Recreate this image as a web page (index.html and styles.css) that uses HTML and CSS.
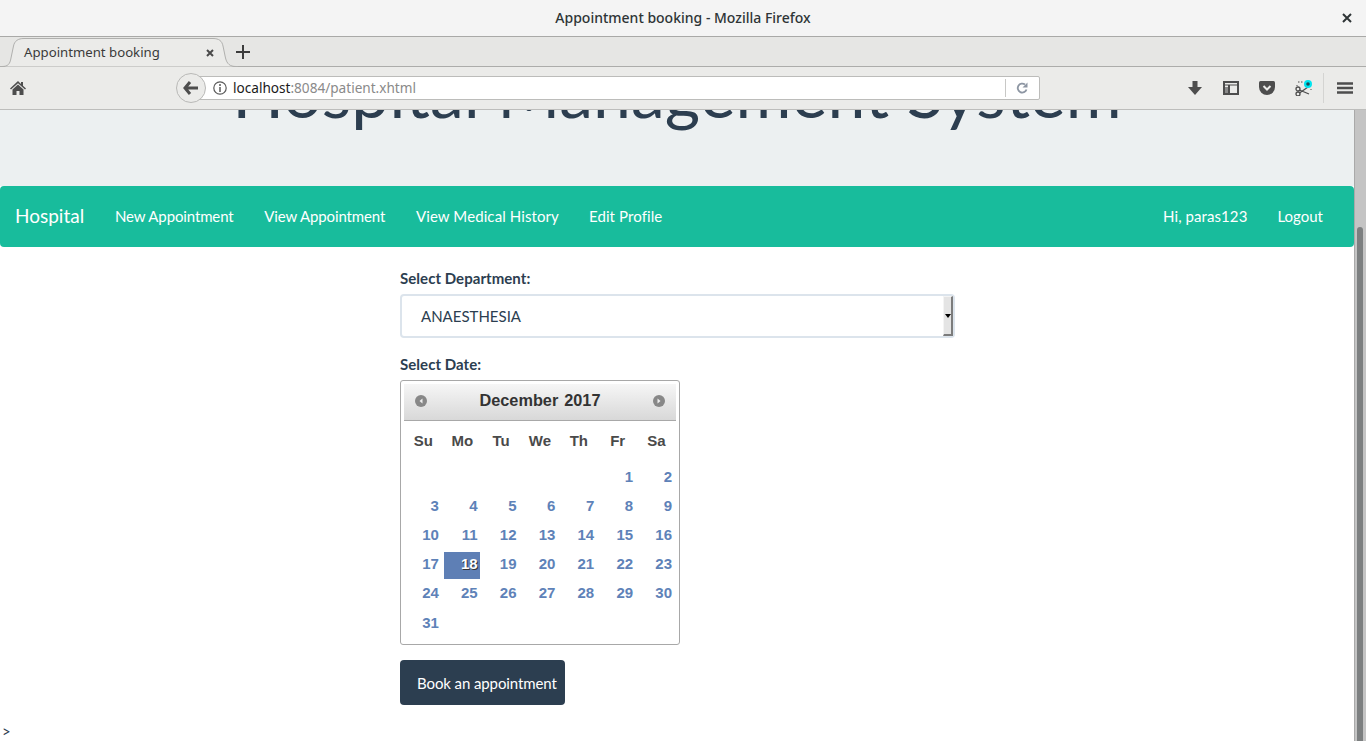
FILE: index.html
```html
<!DOCTYPE html>
<html>
<head>
    <title>Appointment booking</title>
    <link rel="stylesheet" href="styles.css">
</head>
<body>
    <div class="titlebar">
        <span class="window-title">Appointment booking - Mozilla Firefox</span>
        <svg class="window-close" width="10" height="10" viewBox="0 0 10 10"><path d="M1 1L9 9M9 1L1 9" stroke="#2e3436" stroke-width="2"/></svg>
    </div>
    <div class="tabbar">
        <div class="tab">
            <svg class="tab-shape" width="238" height="31" viewBox="0 0 238 31"><path d="M0 30.500H2C8 30.500 10 28 11 22L13.500 10C14.500 5 18 2.500 24 2.500H213C219 2.500 222 5 223 10L225.500 22C227 28 230 30.500 236 30.500H238" fill="#ebebe9" stroke="#b0b0ae"/></svg>
            <span class="tab-title">Appointment booking</span>
            <svg class="tab-close" width="8" height="8" viewBox="0 0 8 8"><path d="M1 1L7 7M7 1L1 7" stroke="#4a4a4a" stroke-width="2"/></svg>
        </div>
        <svg class="new-tab" width="14" height="14" viewBox="0 0 14 14"><path d="M7 0V14M0 7H14" stroke="#3c3c3c" stroke-width="2"/></svg>
    </div>
    <div class="toolbar">
        <svg class="home-icon" width="16" height="14" viewBox="0 0 16 14"><path d="M8 0L0 7.500L1 8.500L8 2.200L15 8.500L16 7.500L13 4.700V1H11V2.900ZM8 3.500L2.500 8.500V14H6.500V10H9.500V14H13.500V8.500Z" fill="#4d4d4d"/></svg>
        <div class="urlbar">
            <div class="back-btn">
                <svg width="16" height="14" viewBox="0 0 16 14"><path d="M7 1L2 7L7 13M2.500 7H15" fill="none" stroke="#4d4d4d" stroke-width="3"/></svg>
            </div>
            <svg class="info-icon" width="14" height="14" viewBox="0 0 14 14"><circle cx="7" cy="7" r="6.200" fill="none" stroke="#5a5a5a" stroke-width="1.200"/><path d="M7 6V11M7 3V5" stroke="#5a5a5a" stroke-width="1.500"/></svg>
            <span class="url"><span class="url-host">localhost</span>:8084/patient.xhtml</span>
            <span class="url-sep"></span>
            <svg class="reload-icon" width="12" height="12" viewBox="0 0 12 12"><path d="M10.500 7.500A4.500 4.500 0 1 1 9 2.500" fill="none" stroke="#8d96a3" stroke-width="1.800"/><path d="M11.500 0.500V5.500H6.500Z" fill="#8d96a3"/></svg>
        </div>
        <div class="tools">
            <svg class="download-icon" width="14" height="14" viewBox="0 0 14 14"><path d="M4.500 0H9.500V6H14L7 14L0 6H4.500Z" fill="#4d4d4d"/></svg>
            <svg width="16" height="14" viewBox="0 0 16 14"><path d="M1 1H15V13H1ZM6 4V13" fill="none" stroke="#4d4d4d" stroke-width="2"/><path d="M1 4H15" stroke="#4d4d4d" stroke-width="1"/><path d="M2 6H5V12H2Z" fill="#8a8a8a"/></svg>
            <svg width="16" height="14" viewBox="0 0 16 14"><path d="M1.500 0H14.500Q16 0 16 1.500V6A8 8 0 0 1 0 6V1.500Q0 0 1.500 0Z" fill="#4d4d4d"/><path d="M4.500 5L8 8.500L11.500 5" fill="none" stroke="#ebebe9" stroke-width="2"/></svg>
            <svg class="shot-icon" width="17" height="16" viewBox="0 0 17 16"><circle cx="3" cy="9" r="2" fill="none" stroke="#4d4d4d" stroke-width="1.300"/><circle cx="3" cy="14" r="2" fill="none" stroke="#4d4d4d" stroke-width="1.300"/><path d="M4.500 10L14 14M4.500 13L13 7" stroke="#4d4d4d" stroke-width="1.300"/><path d="M3 2H8M2 5V6M16 9V10" stroke="#4d4d4d" stroke-dasharray="1.500 1.500"/><circle cx="13" cy="4" r="4" fill="#00e5f0"/><circle cx="13" cy="4" r="1.800" fill="#1a4a55"/></svg>
            <span class="tools-sep"></span>
            <svg width="16" height="12" viewBox="0 0 16 12"><path d="M0 1.500H16M0 6H16M0 10.500H16" stroke="#4d4d4d" stroke-width="2.400"/></svg>
        </div>
    </div>
    <div class="viewport">
        <div class="page">
            <div class="jumbotron">
                <h1>Hospital Management System</h1>
            </div>
            <nav class="navbar">
                <a class="brand">Hospital</a>
                <a class="nav-link tight">New Appointment</a>
                <a class="nav-link tight">View Appointment</a>
                <a class="nav-link loose">View Medical History</a>
                <a class="nav-link loose">Edit Profile</a>
                <a class="nav-link nav-right">Hi, paras123</a>
                <a class="nav-link">Logout</a>
            </nav>
            <form class="booking">
                <label class="field-label">Select Department:</label>
                <div class="select-box">
                    <span>ANAESTHESIA</span>
                    <span class="spin-btn"><i class="spin-arrow"></i></span>
                </div>
                <label class="field-label">Select Date:</label>
                <div class="datepicker">
                    <div class="dp-header">
                        <svg width="12" height="12" viewBox="0 0 12 12"><circle cx="6" cy="6" r="6" fill="#888"/><path d="M7.500 3.500L4.500 6L7.500 8.500Z" fill="#eee"/></svg>
                        <span class="dp-title"><span>December</span><span>2017</span></span>
                        <svg width="12" height="12" viewBox="0 0 12 12"><circle cx="6" cy="6" r="6" fill="#888"/><path d="M4.500 3.500L7.500 6L4.500 8.500Z" fill="#eee"/></svg>
                    </div>
                    <table class="dp-table">
                        <thead>
                            <tr><th>Su</th><th>Mo</th><th>Tu</th><th>We</th><th>Th</th><th>Fr</th><th>Sa</th></tr>
                        </thead>
                        <tbody>
                            <tr><td></td><td></td><td></td><td></td><td></td><td><a>1</a></td><td><a>2</a></td></tr>
                            <tr><td><a>3</a></td><td><a>4</a></td><td><a>5</a></td><td><a>6</a></td><td><a>7</a></td><td><a>8</a></td><td><a>9</a></td></tr>
                            <tr><td><a>10</a></td><td><a>11</a></td><td><a>12</a></td><td><a>13</a></td><td><a>14</a></td><td><a>15</a></td><td><a>16</a></td></tr>
                            <tr><td><a>17</a></td><td><a class="dp-active">18</a></td><td><a>19</a></td><td><a>20</a></td><td><a>21</a></td><td><a>22</a></td><td><a>23</a></td></tr>
                            <tr><td><a>24</a></td><td><a>25</a></td><td><a>26</a></td><td><a>27</a></td><td><a>28</a></td><td><a>29</a></td><td><a>30</a></td></tr>
                            <tr class="dp-last"><td><a>31</a></td><td></td><td></td><td></td><td></td><td></td><td></td></tr>
                        </tbody>
                    </table>
                </div>
                <button class="book-btn" type="button">Book an appointment</button>
            </form>
            <div class="stray">&gt;</div>
        </div>
        <div class="scrollbar"><div class="scroll-thumb"></div></div>
    </div>
</body>
</html>
```

FILE: styles.css
```css
html, body {
    height: 100%;
}

body {
    margin: 0;
    overflow: hidden;
    display: flex;
    flex-direction: column;
    font-family: "Lato", sans-serif;
    font-size: 15px;
    color: #2c3e50;
    background: #fff;
}

/* firefox window */
.titlebar {
    height: 37px;
    flex: none;
    display: flex;
    align-items: center;
    justify-content: center;
    padding-bottom: 2px;
    background: #f4f4f4;
    border-bottom: 1px solid #a9a9a7;
    position: relative;
    box-sizing: border-box;
}

.window-title {
    font-family: "Noto Sans", sans-serif;
    font-size: 14px;
    font-weight: 500;
    color: #2e3436;
}

.window-close {
    position: absolute;
    right: 14px;
    top: 13px;
}

.tabbar {
    height: 30px;
    flex: none;
    background: #e6e6e4;
    border-bottom: 1px solid #acacaa;
    box-sizing: border-box;
    display: flex;
    align-items: center;
}

.tab {
    position: relative;
    width: 238px;
    height: 31px;
    margin-top: -1px;
    flex: none;
    align-self: flex-start;
    display: flex;
    align-items: center;
}

.tab-shape {
    position: absolute;
    left: 0;
    top: 0;
}

.tab-title {
    position: relative;
    margin-left: 24px;
    font-family: "Noto Sans", sans-serif;
    font-size: 13.200px;
    color: #3a3a3a;
}

.tab-close {
    position: absolute;
    left: 206px;
    top: 13px;
}

.new-tab {
    margin-left: -2px;
}

.toolbar {
    height: 43px;
    flex: none;
    background: #ebebe9;
    border-bottom: 1px solid #bdbdbb;
    box-sizing: border-box;
    display: flex;
    align-items: center;
}

.home-icon {
    margin-left: 10px;
}

.urlbar {
    margin-left: 165px;
    width: 849px;
    height: 24px;
    box-sizing: border-box;
    background: #fff;
    border: 1px solid #bcbcba;
    border-radius: 2px;
    display: flex;
    align-items: center;
    position: relative;
    padding-left: 21px;
}

.back-btn {
    position: absolute;
    left: -16px;
    top: -4px;
    width: 30px;
    height: 30px;
    box-sizing: border-box;
    border: 1px solid #b9b9b7;
    border-radius: 50%;
    background: #ebebe9;
    display: flex;
    align-items: center;
    justify-content: center;
}

.info-icon {
    flex: none;
}

.url {
    margin-left: 6px;
    padding-bottom: 2px;
    font-family: "Noto Sans", sans-serif;
    font-size: 13.600px;
    color: #8a8a8a;
}

.url-host {
    color: #1a1a1a;
}

.url-sep {
    margin-left: auto;
    width: 1px;
    height: 18px;
    background: #c8c8c6;
}

.reload-icon {
    margin: 0 11px 0 10px;
}

.tools {
    margin-left: auto;
    display: flex;
    align-items: center;
    gap: 20px;
    padding-right: 13px;
}

.download-icon {
    margin-right: 1px;
}

.shot-icon {
    margin-right: -9px;
}

.tools-sep {
    width: 1px;
    height: 30px;
    background: #d4d4d2;
    margin-right: -7px;
}

/* page area */
.viewport {
    flex: 1;
    min-height: 0;
    display: flex;
    overflow: hidden;
}

.page {
    flex: 1;
    min-width: 0;
}

.jumbotron {
    height: 76px;
    background: #ecf0f1;
    overflow: hidden;
    text-align: center;
}

h1 {
    margin: -56px 0 0;
    font-size: 68px;
    line-height: 75px;
    font-weight: 400;
    white-space: nowrap;
}

.navbar {
    height: 61px;
    box-sizing: border-box;
    background: #18bc9c;
    border-radius: 4px;
    display: flex;
    align-items: center;
    padding: 0 16px 2px 15px;
    color: #fff;
}

.navbar a {
    white-space: nowrap;
}

.brand {
    width: 70px;
    font-size: 19px;
    margin-right: 15px;
}

.nav-link {
    padding: 0 15px;
}

.tight {
    letter-spacing: -0.130px;
    margin-right: 0.750px;
}

.loose {
    letter-spacing: 0.100px;
}

.nav-right {
    margin-left: auto;
    letter-spacing: 0.080px;
}

.booking {
    margin-left: 400px;
    display: flex;
    flex-direction: column;
    align-items: flex-start;
}

.field-label {
    font-weight: 700;
    line-height: 21px;
    letter-spacing: 0.050px;
    margin-top: 21px;
    margin-bottom: 5px;
}

.select-box {
    width: 555px;
    height: 44px;
    box-sizing: border-box;
    border: 2px solid #dce4ec;
    border-radius: 4px;
    padding-left: 19px;
    display: flex;
    align-items: center;
    justify-content: space-between;
    margin-bottom: 6px;
}

.select-box + .field-label {
    margin-top: 10px;
}

.spin-btn {
    width: 10px;
    height: 40px;
    box-sizing: border-box;
    background: #e4e4e4;
    border-top: 1px solid #f4f4f4;
    border-left: 1px solid #f4f4f4;
    border-right: 2px solid #7c7c7c;
    border-bottom: 2px solid #7c7c7c;
    display: flex;
    align-items: center;
    justify-content: center;
}

.spin-arrow {
    border: 3px solid transparent;
    border-top: 4px solid #000;
    border-bottom: 0;
}

.datepicker {
    width: 280px;
    height: 265px;
    box-sizing: border-box;
    border: 1px solid #a8a8a8;
    border-radius: 3px;
    padding: 3px;
    font-family: "Liberation Sans", sans-serif;
    font-size: 15px;
    font-weight: 700;
}

.dp-header {
    height: 37px;
    box-sizing: border-box;
    background: linear-gradient(#f6f6f6, #d8d8d8);
    border-bottom: 1px solid #a8a8a8;
    display: flex;
    align-items: center;
    justify-content: space-between;
    padding: 0 11px 3px;
}

.dp-title {
    display: flex;
    gap: 6px;
    font-size: 16.300px;
    color: #333;
}

.dp-table {
    width: 272px;
    border-collapse: collapse;
    table-layout: fixed;
    margin-top: 3px;
}

.dp-table th {
    height: 40px;
    box-sizing: border-box;
    padding: 0 0 7px;
    color: #4a4a4a;
    text-align: center;
}

.dp-table td {
    height: 29px;
    padding: 1px 2px 1px 1px;
    box-sizing: border-box;
}

.dp-table a {
    display: block;
    height: 27px;
    line-height: 23px;
    padding-right: 2px;
    text-align: right;
    color: #5e82b8;
}

.dp-last a {
    padding-top: 1px;
}

.dp-table a.dp-active {
    background: #5e7fb5;
    color: #fff;
    text-shadow: 1px 1px 0 #333;
}

.book-btn {
    margin-top: 15px;
    width: 165px;
    height: 45px;
    padding: 0 0 0 17px;
    text-align: left;
    background: #2c3e50;
    color: #fff;
    border: 0;
    border-radius: 4px;
    font-family: "Lato", sans-serif;
    font-size: 15px;
    letter-spacing: -0.100px;
}

.stray {
    margin: 14px 0 0 2px;
    font-size: 15px;
    line-height: 24px;
    color: #2c3e50;
}

.scrollbar {
    width: 12px;
    flex: none;
    box-sizing: border-box;
    background: #c4c4c4;
    border-left: 1px solid #a9a9a9;
    padding: 117px 3px 0 2px;
}

.scroll-thumb {
    height: 100%;
    background: #7c7f80;
    border-radius: 3px 3px 0 0;
}
```
